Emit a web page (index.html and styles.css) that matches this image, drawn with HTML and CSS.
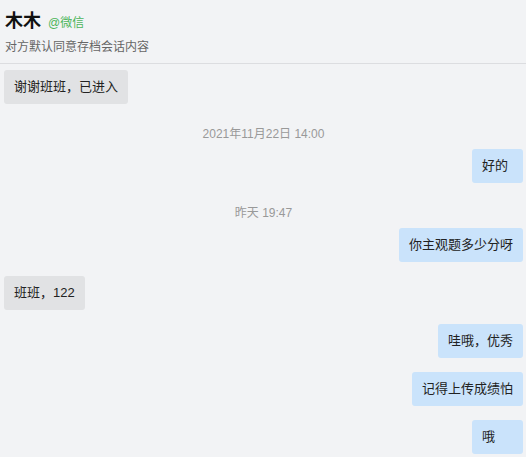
FILE: index.html
```html
<!DOCTYPE html>
<html lang="zh-CN">
<head>
    <meta charset="UTF-8">
    <title>会话存档</title>
    <link rel="stylesheet" href="styles.css">
</head>
<body>
<div class="header">
    <div class="title">
        <span class="name">木木</span>
        <span class="source">@微信</span>
    </div>
    <div class="tip">对方默认同意存档会话内容</div>
</div>
<div class="chat">
    <div class="msg left"><div class="bubble">谢谢班班，已进入</div></div>
    <div class="time">2021年11月22日 14:00</div>
    <div class="msg right"><div class="bubble">好的</div></div>
    <div class="time">昨天 19:47</div>
    <div class="msg right"><div class="bubble">你主观题多少分呀</div></div>
    <div class="msg left"><div class="bubble">班班，122</div></div>
    <div class="msg right"><div class="bubble">哇哦，优秀</div></div>
    <div class="msg right"><div class="bubble">记得上传成绩怕</div></div>
    <div class="msg right"><div class="bubble">哦</div></div>
</div>
</body>
</html>
```
FILE: styles.css
```css
* {
    padding: 0;
    margin: 0;
    box-sizing: border-box;
}
body {
    background: #f2f3f5;
    font-family: "Liberation Sans", "Noto Sans CJK SC", sans-serif;
    color: #222;
    font-size: 13px;
}
.header {
    padding: 9px 4px 7px 5px;
    border-bottom: 1px solid #dcdde0;
}
.title {
    display: flex;
    align-items: baseline;
    gap: 7px;
    line-height: 24px;
}
.name {
    font-size: 18px;
    font-weight: bold;
    color: #111;
}
.source {
    font-size: 12px;
    color: #4cb55a;
}
.tip {
    margin-top: 3px;
    font-size: 12px;
    line-height: 18px;
    color: #666;
}
.chat {
    display: flex;
    flex-direction: column;
    padding: 6px 3px 0 4px;
}
.msg {
    display: flex;
    margin-bottom: 14px;
}
.msg.right {
    justify-content: flex-end;
}
.bubble {
    min-width: 51px;
    padding: 10px;
    line-height: 14px;
    border-radius: 3px;
    background: #e1e2e4;
}
.right .bubble {
    background: #cae3fb;
}
.time {
    margin: 8px 0 7px;
    text-align: center;
    font-size: 12px;
    line-height: 16px;
    color: #999;
}
```
